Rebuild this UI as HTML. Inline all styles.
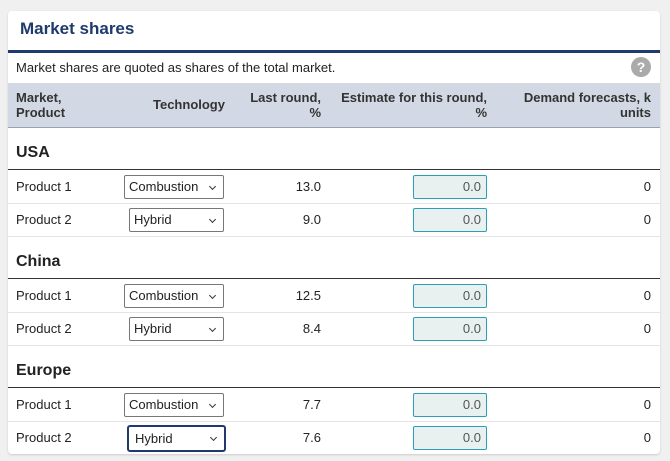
<!DOCTYPE html>
<html><head><style>
*{margin:0;padding:0;box-sizing:border-box}
body{width:670px;height:461px;background:#f0f0f0;font-family:"Liberation Sans",sans-serif;color:#222;position:relative;overflow:hidden}
.card{position:absolute;left:8px;top:11px;width:652px;height:443px;background:#fff;border-radius:4px;box-shadow:0 1px 2px rgba(0,0,0,.15)}
.a{position:absolute;white-space:nowrap}
.t{left:12px;top:8px;font-size:17px;font-weight:bold;color:#1f3a6b}
.bl{left:0;top:39px;width:652px;height:3px;background:#1f3a6b}
.desc{left:8px;top:49px;font-size:13px;color:#222}
.help{left:623px;top:46px;width:20px;height:20px;border-radius:50%;background:#aaa;color:#fff;font-size:14px;text-align:center;line-height:20px;font-weight:bold}
.hd{left:0;top:72px;width:652px;height:45px;background:#d3d9e4;border-bottom:1px solid #98a2b4}
.h{font-size:13px;font-weight:bold;color:#333;line-height:15px}
.sec{font-size:16px;font-weight:bold;color:#222}
.ln{left:0;width:652px;height:1px;background:#333}
.rl{left:0;width:652px;height:1px;background:#e4e4e4}
.p{left:8px;font-size:13px}
.sel{height:24px;border:1px solid #777;border-radius:2px;font-size:13px;padding-left:4px;line-height:22px;right:436px}
.sel:after{content:"";position:absolute;right:8px;top:8px;width:4px;height:4px;border-right:1px solid #333;border-bottom:1px solid #333;transform:rotate(45deg)}
.lr{right:339px;font-size:13px}
.in{left:405px;width:74px;height:24px;background:#e8f0f0;border:1px solid #2aa0b8;border-radius:2px;font-size:13px;text-align:right;padding-right:5px;line-height:22px;color:#555}
.d{right:9px;font-size:13px}
</style></head><body>
<div class="card">
<div class="a t">Market shares</div>
<div class="a bl"></div>
<div class="a desc">Market shares are quoted as shares of the total market.</div>
<div class="a help">?</div>
<div class="a hd"></div>
<div class="a h" style="left:8px;top:79px">Market,<br>Product</div>
<div class="a h" style="left:145px;top:86px">Technology</div>
<div class="a h" style="right:339px;top:79px;text-align:right">Last round,<br>%</div>
<div class="a h" style="right:173px;top:79px;text-align:right">Estimate for this round,<br>%</div>
<div class="a h" style="right:9px;top:79px;text-align:right">Demand forecasts, k<br>units</div>

<div class="a sec" style="left:8px;top:133px">USA</div>
<div class="a ln" style="top:158px"></div>
<div class="a p" style="top:168px">Product 1</div>
<div class="a sel" style="left:116px;top:164px">Combustion</div>
<div class="a lr" style="top:168px">13.0</div>
<div class="a in" style="top:164px">0.0</div>
<div class="a d" style="top:168px">0</div>
<div class="a rl" style="top:192px"></div>
<div class="a p" style="top:201px">Product 2</div>
<div class="a sel" style="left:121px;top:197px">Hybrid</div>
<div class="a lr" style="top:201px">9.0</div>
<div class="a in" style="top:197px">0.0</div>
<div class="a d" style="top:201px">0</div>
<div class="a rl" style="top:225px"></div>

<div class="a sec" style="left:8px;top:242px">China</div>
<div class="a ln" style="top:267px"></div>
<div class="a p" style="top:277px">Product 1</div>
<div class="a sel" style="left:116px;top:273px">Combustion</div>
<div class="a lr" style="top:277px">12.5</div>
<div class="a in" style="top:273px">0.0</div>
<div class="a d" style="top:277px">0</div>
<div class="a rl" style="top:301px"></div>
<div class="a p" style="top:310px">Product 2</div>
<div class="a sel" style="left:121px;top:306px">Hybrid</div>
<div class="a lr" style="top:310px">8.4</div>
<div class="a in" style="top:306px">0.0</div>
<div class="a d" style="top:310px">0</div>
<div class="a rl" style="top:334px"></div>

<div class="a sec" style="left:8px;top:351px">Europe</div>
<div class="a ln" style="top:376px"></div>
<div class="a p" style="top:386px">Product 1</div>
<div class="a sel" style="left:116px;top:382px">Combustion</div>
<div class="a lr" style="top:386px">7.7</div>
<div class="a in" style="top:382px">0.0</div>
<div class="a d" style="top:386px">0</div>
<div class="a rl" style="top:410px"></div>
<div class="a p" style="top:419px">Product 2</div>
<div class="a sel" style="left:119px;top:414px;height:27px;border:2px solid #1f3a6b;border-radius:3px;padding-left:6px;right:434px;line-height:23px">Hybrid</div>
<div class="a lr" style="top:419px">7.6</div>
<div class="a in" style="top:415px">0.0</div>
<div class="a d" style="top:419px">0</div>
</div>
</body></html>
